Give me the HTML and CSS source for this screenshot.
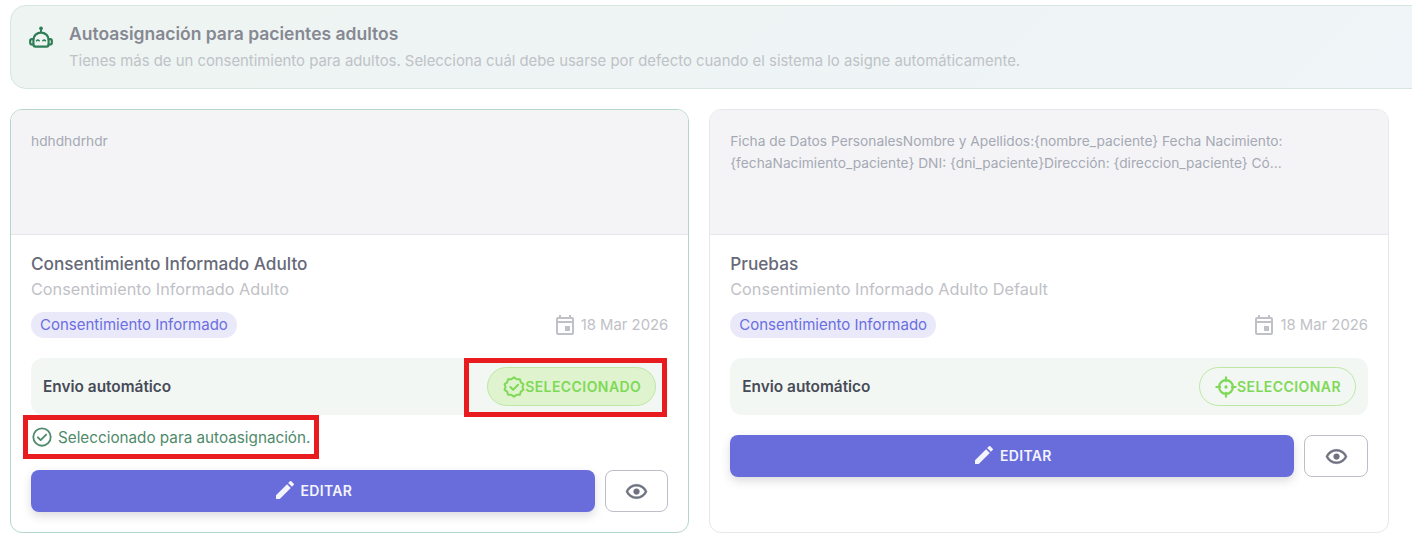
FILE: index.html
```html
<!DOCTYPE html>
<html lang="es">
<head>
    <meta charset="UTF-8">
    <title>Autoasignación</title>
    <link rel="stylesheet" href="styles.css">
</head>
<body>
<div class="page">
    <div class="banner">
        <svg class="banner-icon" viewBox="0 0 24 24"><circle cx="12" cy="3" r="1.700" fill="currentColor"/><path fill="none" stroke="currentColor" stroke-width="1.800" d="M12 4v3"/><path fill="none" stroke="currentColor" stroke-width="2" stroke-linejoin="round" d="M5 13.500a7 6.500 0 0 1 14 0v4.500a2 2 0 0 1-2 2H7a2 2 0 0 1-2-2z"/><path fill="none" stroke="currentColor" stroke-width="2" stroke-linecap="round" d="M5 13H3.600a1.600 1.600 0 0 0-1.600 1.600v1.800a1.600 1.600 0 0 0 1.600 1.600H5M19 13h1.400a1.600 1.600 0 0 1 1.600 1.600v1.800a1.600 1.600 0 0 1-1.600 1.600H19"/><path fill="none" stroke="currentColor" stroke-width="1.400" stroke-linecap="round" d="M7.900 14.600q1.200-1.500 2.400 0M13.700 14.600q1.200-1.500 2.400 0"/></svg>
        <div>
            <div class="banner-title">Autoasignación para pacientes adultos</div>
            <div class="banner-text">Tienes más de un consentimiento para adultos. Selecciona cuál debe usarse por defecto cuando el sistema lo asigne automáticamente.</div>
        </div>
    </div>

    <div class="cards">
        <div class="card card-active">
            <div class="preview">hdhdhdrhdr</div>
            <div class="card-body">
                <div class="card-title">Consentimiento Informado Adulto</div>
                <div class="card-sub">Consentimiento Informado Adulto</div>
                <div class="meta">
                    <span class="tag">Consentimiento Informado</span>
                    <span class="date">
                        <svg class="date-icon" viewBox="0 0 24 24"><path fill="currentColor" d="M19 4h-1V2h-2v2H8V2H6v2H5a2 2 0 0 0-2 2v14a2 2 0 0 0 2 2h14a2 2 0 0 0 2-2V6a2 2 0 0 0-2-2zm0 16H5V10h14v10zM5 8V6h14v2H5zm7 5h5v5h-5z"/></svg>
                        18 Mar 2026
                    </span>
                </div>
                <div class="auto-row">
                    <span class="auto-label">Envio automático</span>
                    <div class="pick pick-on">
                        <svg class="pick-icon" viewBox="0 0 24 24"><path fill="none" stroke="currentColor" stroke-width="2.200" stroke-linejoin="round" d="M12 1.500l2.900 2.100 3.500-.1 1.100 3.400 2.800 2.100-1.100 3 1.100 3-2.800 2.100-1.100 3.400-3.500-.1-2.900 2.100-2.900-2.100-3.500.1-1.100-3.400-2.800-2.100 1.100-3-1.100-3 2.800-2.100 1.100-3.400 3.500.1z"/><path fill="none" stroke="currentColor" stroke-width="2.200" stroke-linecap="round" stroke-linejoin="round" d="M8 12l3 3 5.500-5.500"/></svg>
                        SELECCIONADO
                        <span class="mark mark-pick"></span>
                    </div>
                </div>
                <div class="note">
                    <svg class="note-icon" viewBox="0 0 24 24"><circle cx="12" cy="12" r="9.500" fill="none" stroke="currentColor" stroke-width="2"/><path fill="none" stroke="currentColor" stroke-width="2" stroke-linecap="round" stroke-linejoin="round" d="M7.500 12.300l3 3 6-6"/></svg>
                    Seleccionado para autoasignación.
                    <span class="mark mark-note"></span>
                </div>
                <div class="actions">
                    <button class="btn-edit">
                        <svg class="edit-icon" viewBox="0 0 24 24"><path fill="currentColor" d="M3 17.250V21h3.750L17.810 9.940l-3.750-3.750L3 17.250zM20.710 7.040a1 1 0 0 0 0-1.410l-2.340-2.340a1 1 0 0 0-1.410 0l-1.830 1.830 3.750 3.750 1.830-1.830z"/></svg>
                        EDITAR
                    </button>
                    <button class="btn-view">
                        <svg class="view-icon" viewBox="0 0 24 24"><path fill="currentColor" d="M12 4.500C7 4.500 2.730 7.610 1 12c1.730 4.390 6 7.500 11 7.500s9.270-3.110 11-7.500c-1.730-4.390-6-7.500-11-7.500zm0 13c-3.790 0-7.170-2.130-8.820-5.500C4.830 8.630 8.210 6.500 12 6.500s7.170 2.130 8.820 5.500c-1.650 3.370-5.030 5.500-8.820 5.500zM12 9a3 3 0 1 0 0 6 3 3 0 0 0 0-6z"/></svg>
                    </button>
                </div>
            </div>
        </div>

        <div class="card">
            <div class="preview">Ficha de Datos PersonalesNombre y Apellidos:{nombre_paciente} Fecha Nacimiento: {fechaNacimiento_paciente} DNI: {dni_paciente}Dirección: {direccion_paciente} Có...</div>
            <div class="card-body">
                <div class="card-title">Pruebas</div>
                <div class="card-sub">Consentimiento Informado Adulto Default</div>
                <div class="meta">
                    <span class="tag">Consentimiento Informado</span>
                    <span class="date">
                        <svg class="date-icon" viewBox="0 0 24 24"><path fill="currentColor" d="M19 4h-1V2h-2v2H8V2H6v2H5a2 2 0 0 0-2 2v14a2 2 0 0 0 2 2h14a2 2 0 0 0 2-2V6a2 2 0 0 0-2-2zm0 16H5V10h14v10zM5 8V6h14v2H5zm7 5h5v5h-5z"/></svg>
                        18 Mar 2026
                    </span>
                </div>
                <div class="auto-row">
                    <span class="auto-label">Envio automático</span>
                    <div class="pick">
                        <svg class="pick-icon" viewBox="0 0 24 24"><circle cx="12" cy="12" r="7.500" fill="none" stroke="currentColor" stroke-width="2.400"/><circle cx="12" cy="12" r="1.800" fill="currentColor"/><path fill="none" stroke="currentColor" stroke-width="2.400" stroke-linecap="round" d="M12 1.500v4M12 18.500v4M1.500 12h4M18.500 12h4"/></svg>
                        SELECCIONAR
                    </div>
                </div>
                <div class="actions">
                    <button class="btn-edit">
                        <svg class="edit-icon" viewBox="0 0 24 24"><path fill="currentColor" d="M3 17.250V21h3.750L17.810 9.940l-3.750-3.750L3 17.250zM20.710 7.040a1 1 0 0 0 0-1.410l-2.340-2.340a1 1 0 0 0-1.410 0l-1.830 1.830 3.750 3.750 1.830-1.830z"/></svg>
                        EDITAR
                    </button>
                    <button class="btn-view">
                        <svg class="view-icon" viewBox="0 0 24 24"><path fill="currentColor" d="M12 4.500C7 4.500 2.730 7.610 1 12c1.730 4.390 6 7.500 11 7.500s9.270-3.110 11-7.500c-1.730-4.390-6-7.500-11-7.500zm0 13c-3.790 0-7.170-2.130-8.820-5.500C4.830 8.630 8.210 6.500 12 6.500s7.170 2.130 8.820 5.500c-1.650 3.370-5.030 5.500-8.820 5.500zM12 9a3 3 0 1 0 0 6 3 3 0 0 0 0-6z"/></svg>
                    </button>
                </div>
            </div>
        </div>
    </div>
</div>
</body>
</html>
```

FILE: styles.css
```css
* {
    margin: 0;
    padding: 0;
    box-sizing: border-box;
}
html, body {
    height: 100%;
    overflow: hidden;
}
body {
    background: #fff;
    font-family: "Inter", "Liberation Sans", sans-serif;
}
.page {
    padding: 5px 23px 0 10px;
}
.banner {
    display: flex;
    gap: 15px;
    height: 84px;
    margin-right: -40px;
    padding: 17px 17px;
    border: 1px solid #d5e5df;
    border-radius: 16px;
    background: linear-gradient(135deg, #eef4f1, #eff5f8);
}
.banner-icon {
    flex: none;
    width: 26px;
    height: 26px;
    margin-top: 2px;
    color: #2e7d57;
}
.banner-title {
    font-size: 17.500px;
    line-height: 22px;
    font-weight: 600;
    color: #868892;
}
.banner-text {
    margin-top: 6px;
    font-size: 14.860px;
    line-height: 20px;
    color: #bfc2c8;
}
.cards {
    display: grid;
    grid-template-columns: 679.250px 679.750px;
    gap: 20px;
    margin-top: 20px;
}
.card {
    height: 424px;
    border: 1px solid #e6e7ea;
    border-radius: 12px;
    overflow: hidden;
    background: #fff;
}
.card-active {
    border-color: #b5d6ca;
}
.preview {
    height: 125px;
    padding: 20px 20px;
    border-bottom: 1px solid #e6e7ea;
    background: #f4f4f7;
    font-size: 13.750px;
    line-height: 22px;
    color: #a5a9b3;
}
.card-body {
    padding: 18px 20px 0;
}
.card-title {
    font-size: 17.200px;
    line-height: 22px;
    font-weight: 500;
    color: #666977;
}
.card-sub {
    margin-top: 3px;
    font-size: 16.250px;
    line-height: 22px;
    color: #bfc1c7;
}
.meta {
    display: flex;
    align-items: center;
    justify-content: space-between;
    margin-top: 12px;
}
.tag {
    height: 26px;
    padding: 0 9px;
    border-radius: 13px;
    background: #e9e9fa;
    font-size: 15px;
    line-height: 26px;
    font-weight: 400;
    color: #6b6ee0;
}
.date {
    display: flex;
    align-items: center;
    gap: 4px;
    font-size: 14.850px;
    color: #bfc1c7;
}
.date-icon {
    width: 24px;
    height: 24px;
}
.auto-row {
    display: flex;
    align-items: center;
    justify-content: space-between;
    height: 57px;
    margin-top: 20px;
    padding: 0 12px;
    border-radius: 12px;
    background: #f3f7f4;
}
.auto-label {
    font-size: 15.400px;
    font-weight: 600;
    color: #474b57;
}
.pick {
    position: relative;
    display: flex;
    align-items: center;
    height: 39px;
    padding: 0 14px 0 15px;
    border: 1px solid #bde8a4;
    border-radius: 20px;
    font-size: 14px;
    font-weight: 600;
    letter-spacing: 0.43px;
    color: #7ed957;
}
.pick-on {
    background: #dff3cf;
}
.pick-icon {
    width: 22px;
    height: 22px;
}
.note {
    position: relative;
    display: flex;
    align-items: center;
    gap: 5px;
    height: 24px;
    margin-top: 10px;
    font-size: 15.250px;
    color: #4f8a6c;
}
.note-icon {
    width: 22px;
    height: 22px;
}
.mark {
    position: absolute;
    border: 5px solid #e81c1f;
}
.mark-pick {
    top: -10px;
    left: -24px;
    right: -12px;
    bottom: -12px;
}
.mark-note {
    top: -10px;
    left: -8px;
    width: 296px;
    height: 44px;
}
.actions {
    display: flex;
    gap: 10px;
    margin-top: 20px;
}
.note + .actions {
    margin-top: 21px;
}
.btn-edit {
    display: flex;
    flex: 1;
    align-items: center;
    justify-content: center;
    gap: 4px;
    height: 42px;
    padding: 0 1px 2px 0;
    border: 0;
    border-radius: 8px;
    background: #696ddc;
    box-shadow: 0 4px 10px rgba(60, 60, 80, 0.18);
    font-family: inherit;
    font-size: 14px;
    font-weight: 600;
    letter-spacing: 0.3px;
    color: #f4f4fd;
}
.edit-icon {
    width: 24px;
    height: 24px;
}
.btn-view {
    display: flex;
    align-items: center;
    justify-content: center;
    width: 63.600px;
    height: 42px;
    border: 1px solid #bcbec8;
    border-radius: 8px;
    background: #fff;
}
.view-icon {
    width: 23px;
    height: 23px;
    color: #6d7280;
    stroke: currentColor;
    stroke-width: 0.5;
}
```
